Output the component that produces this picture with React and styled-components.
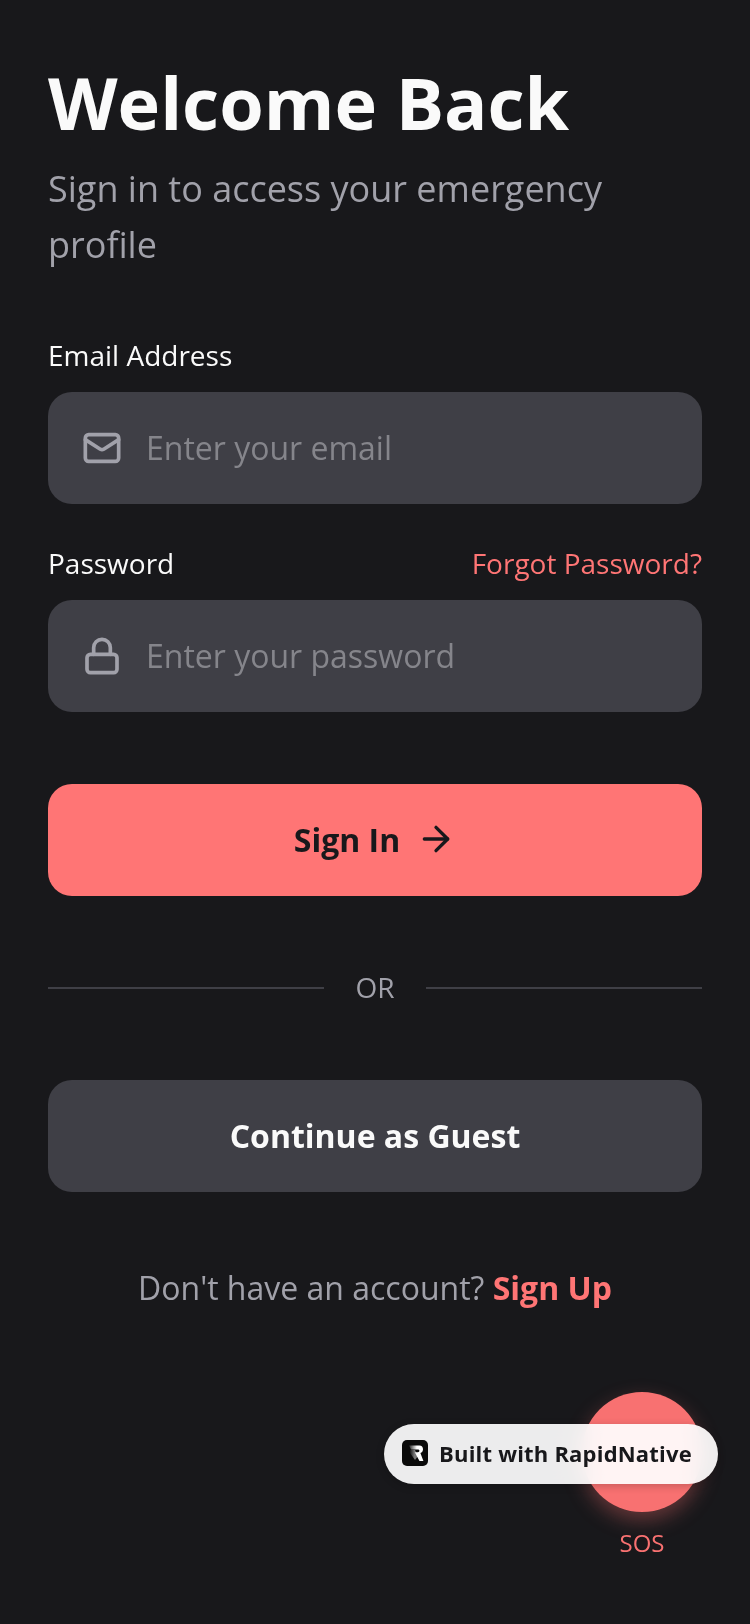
import React from "react";
import styled, { createGlobalStyle } from "styled-components";
import { Mail, Lock, ArrowRight } from "lucide-react";

const GlobalStyle = createGlobalStyle`
  html, body {
    margin: 0;
    padding: 0;
    background: #18181b;
  }
  * {
    box-sizing: border-box;
  }
`;

//own layer with no background, so text gets plain grey antialiasing
const Page = styled.div`
  position: relative;
  width: 750px;
  height: 1624px;
  overflow: hidden;
  padding: 62px 48px 0;
  will-change: transform;
  font-family: "Open Sans", sans-serif;
`;

const Title = styled.h1`
  margin: 0 0 19px;
  font-size: 72px;
  line-height: 80px;
  font-weight: 700;
  color: #fafafa;
`;

const Subtitle = styled.p`
  margin: 0 0 62px;
  font-size: 36px;
  line-height: 56px;
  color: #a1a1aa;
`;

const Field = styled.div`
  margin-bottom: 39px;
`;

const LabelRow = styled.div`
  display: flex;
  justify-content: space-between;
  align-items: center;
  margin-bottom: 17px;
`;

const Label = styled.label`
  font-size: 28px;
  line-height: 40px;
  color: #fafafa;
`;

const ForgotLink = styled.a`
  font-size: 28px;
  line-height: 40px;
  color: #ff7575;
`;

const InputBox = styled.div`
  display: flex;
  align-items: center;
  gap: 24px;
  height: 112px;
  padding: 0 34px;
  border-radius: 24px;
  background: #3f3f46;
  color: #a1a1aa;
`;

const Input = styled.input`
  flex: 1;
  min-width: 0;
  border: 0;
  outline: 0;
  padding: 0 0 2px;
  background: transparent;
  font-family: inherit;
  font-size: 32px;
  color: #fafafa;
  &::placeholder {
    color: #85858b;
    opacity: 1;
  }
`;

const PrimaryButton = styled.button`
  display: flex;
  align-items: center;
  justify-content: center;
  gap: 16px;
  width: 100%;
  height: 112px;
  margin-top: 72px;
  padding: 0 0 2px;
  border: 0;
  border-radius: 24px;
  background: #ff7575;
  color: #18181b;
  font-family: inherit;
  font-size: 32px;
  font-weight: 700;
`;

const Divider = styled.div`
  display: flex;
  align-items: center;
  gap: 31px;
  margin: 64px 0;
  font-size: 28px;
  line-height: 56px;
  color: #a1a1aa;
  &::before,
  &::after {
    content: "";
    flex: 1;
    height: 2px;
    background: #3f3f46;
  }
`;

const DividerText = styled.span`
  line-height: 54px;
  padding-bottom: 2px;
`;

const GuestButton = styled.button`
  display: block;
  width: 100%;
  height: 112px;
  padding: 0 0 2px;
  border: 0;
  border-radius: 24px;
  background: #3f3f46;
  color: #fafafa;
  font-family: inherit;
  font-size: 32px;
  font-weight: 700;
`;

const Footer = styled.p`
  margin: 72px 0 0;
  text-align: center;
  font-size: 32px;
  line-height: 48px;
  color: #a1a1aa;
`;

const SignUp = styled.a`
  font-weight: 700;
  color: #ff7575;
`;

const Sos = styled.div`
  position: absolute;
  left: 582px;
  top: 1392px;
  width: 120px;
  display: flex;
  flex-direction: column;
  align-items: center;
  gap: 15px;
`;

const SosCircle = styled.div`
  width: 120px;
  height: 120px;
  border-radius: 50%;
  background: #f87171;
  box-shadow: 0 8px 20px rgba(248, 113, 113, 0.35);
`;

const SosLabel = styled.span`
  font-size: 24px;
  line-height: 32px;
  color: #f87171;
`;

const Badge = styled.div`
  position: absolute;
  left: 384px;
  top: 1424px;
  width: 334px;
  height: 60px;
  display: flex;
  align-items: center;
  gap: 11px;
  padding: 0 0 2px 18px;
  border-radius: 30px;
  background: rgba(255, 255, 255, 0.92);
  backdrop-filter: blur(10px);
  box-shadow: 0 2px 8px rgba(0, 0, 0, 0.2);
  font-size: 22px;
  font-weight: 700;
  letter-spacing: 0.2px;
  color: #18181b;
`;

function RapidLogo() {
  return (
    <svg width="26" height="26" viewBox="0 0 26 26">
      <defs>
        <linearGradient id="logoFade" x1="0" x2="1" y1="0" y2="0">
          <stop offset="0" stopColor="#fff" stopOpacity="0.1" />
          <stop offset="0.55" stopColor="#fff" />
        </linearGradient>
      </defs>
      <rect width="26" height="26" rx="5" fill="#0a0a0a" />
      <path d="M8 10h5l3 6-3 4-5-7z" fill="url(#logoFade)" opacity="0.45" />
      <path
        d="M7 5.5h10.5c2.2 0 3.5 1.5 3.5 3.8 0 2-1 3.2-2.6 3.8l3 7.9h-3.9l-4.8-8.8h3.2c1 0 1.5-.6 1.5-1.4s-.5-1.4-1.5-1.4H9z"
        fill="url(#logoFade)"
      />
    </svg>
  );
}

export default function App() {
  return (
    <Page>
      <GlobalStyle />
      <Title>Welcome Back</Title>
      <Subtitle>Sign in to access your emergency profile</Subtitle>

      <Field>
        <LabelRow>
          <Label>Email Address</Label>
        </LabelRow>
        <InputBox>
          <Mail size={40} strokeWidth={2.2} />
          <Input placeholder="Enter your email" />
        </InputBox>
      </Field>

      <Field>
        <LabelRow>
          <Label>Password</Label>
          <ForgotLink>Forgot Password?</ForgotLink>
        </LabelRow>
        <InputBox>
          <Lock size={40} strokeWidth={2.2} />
          <Input type="password" placeholder="Enter your password" />
        </InputBox>
      </Field>

      <PrimaryButton>
        Sign In
        <ArrowRight size={40} strokeWidth={2} />
      </PrimaryButton>

      <Divider>
        <DividerText>OR</DividerText>
      </Divider>

      <GuestButton>Continue as Guest</GuestButton>

      <Footer>
        Don't have an account? <SignUp>Sign Up</SignUp>
      </Footer>

      <Sos>
        <SosCircle />
        <SosLabel>SOS</SosLabel>
      </Sos>

      <Badge>
        <RapidLogo />
        Built with RapidNative
      </Badge>
    </Page>
  );
}
